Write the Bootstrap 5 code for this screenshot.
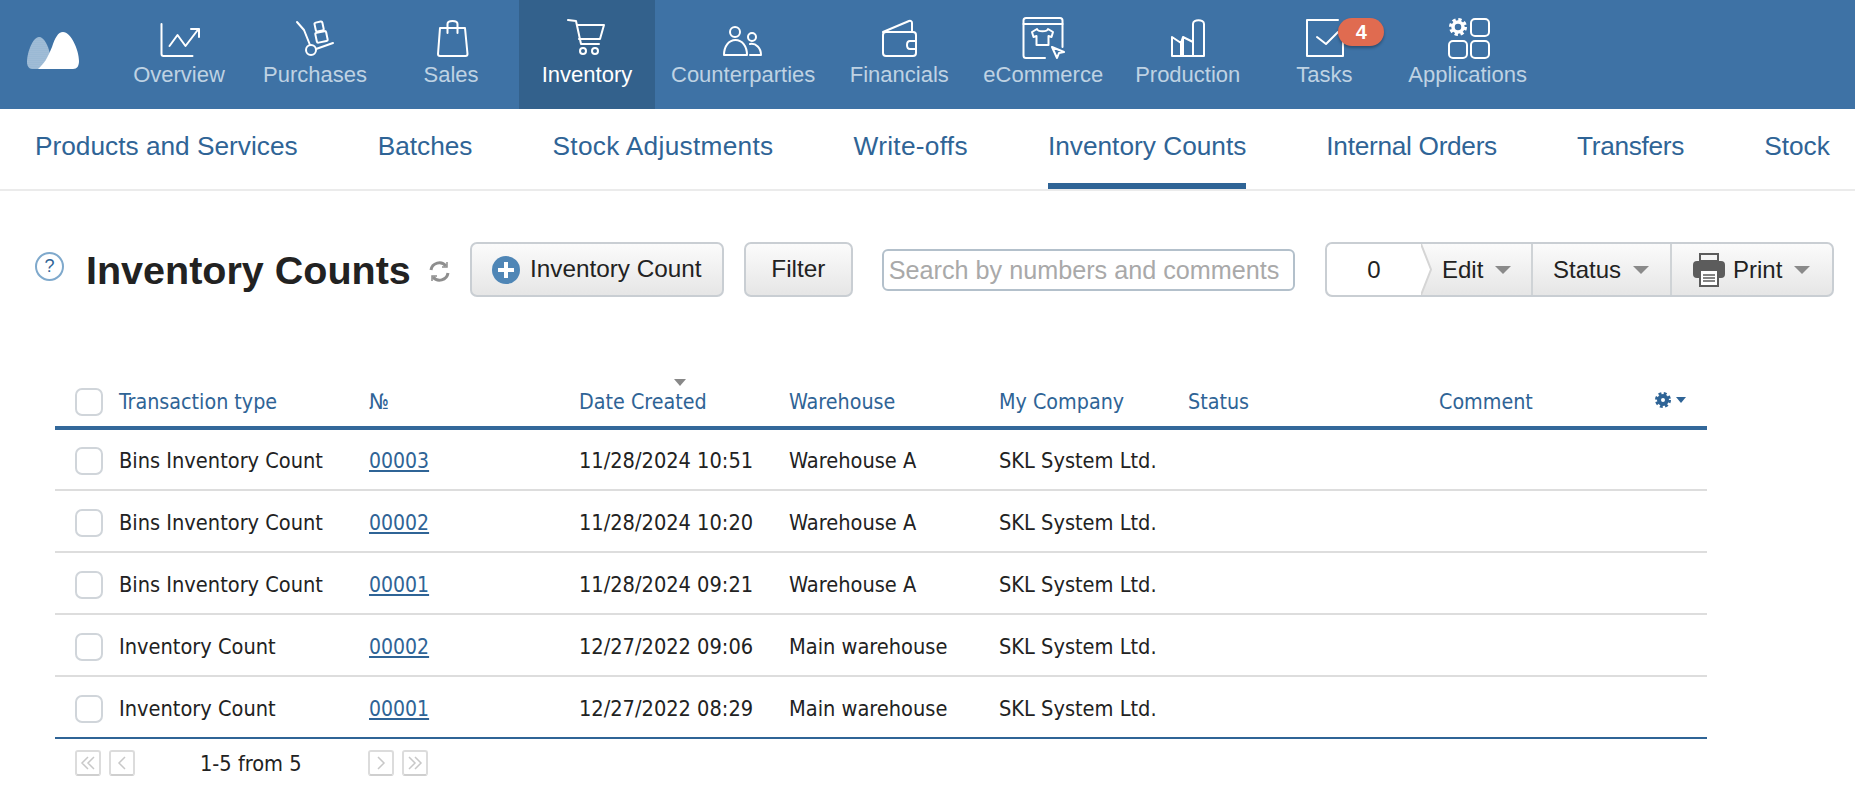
<!DOCTYPE html>
<html lang="en">
<head>
  <meta charset="UTF-8" />
  <meta name="viewport" content="width=device-width, initial-scale=1.0" />
  <title>Inventory Counts</title>
  <link href="https://cdn.jsdelivr.net/npm/bootstrap@5.3.0/dist/css/bootstrap.min.css" rel="stylesheet" />
  <style>
    html, body { height: 100%; }
    body {
      font-family: "Liberation Sans", Arial, sans-serif;
      color: #222;
      background: #fff;
      overflow: hidden;
    }

    /* top bar */
    .top-bar { height: 109px; background: #3e72a5; padding-left: 111px; }
    .logo-box { position: absolute; left: 27px; top: 32px; }
    .top-item {
      position: relative;
      min-width: 136px;
      padding: 18px 16px 0;
      text-align: center;
      color: #bfd2e3;
      font-size: 22px;
      line-height: 30px;
      text-decoration: none;
      white-space: nowrap;
    }
    .top-item svg { display: block; margin: 0 auto 2px; width: 44px; height: 40px; overflow: visible; fill: none; stroke: #fff; stroke-width: 2; stroke-linecap: round; stroke-linejoin: round; }
    .top-item.on { background: #33618c; color: #fff; }
    .task-count {
      position: absolute;
      left: 82px;
      top: 18px;
      width: 46px;
      height: 28px;
      border-radius: 14px;
      background: #e06b50;
      color: #fff;
      font-size: 20px;
      font-weight: 700;
      line-height: 28px;
      box-shadow: 0 2px 3px rgba(0, 0, 0, .3);
    }

    /* second level menu */
    .sub-bar {
      height: 82px;
      gap: 80px;
      padding-left: 35px;
      border-bottom: 2px solid #ebebeb;
      white-space: nowrap;
      overflow: hidden;
    }
    .sub-link {
      display: block;
      height: 80px;
      line-height: 74px;
      font-size: 26.25px;
      color: #2f6496;
      text-decoration: none;
    }
    .sub-link.on { border-bottom: 6px solid #2f6496; }
    .sub-link.spread { letter-spacing: .3px; }
    .sub-link.tight { letter-spacing: -.3px; }

    /* toolbar */
    .tool-row { margin-top: 51px; height: 55px; }
    .help-mark {
      width: 29px; height: 29px; margin: 10px 0 0 35px;
      border: 2px solid #7fa9cc; border-radius: 50%;
      color: #2f6496; font-size: 18px; line-height: 25px; text-align: center;
    }
    .page-title { font-size: 39.5px; font-weight: 700; color: #222; margin: 1px 0 0 22px; line-height: 55px; }
    .reload-mark { margin: 19px 20px 0 18px; }
    .btn-tool {
      height: 55px;
      padding: 0;
      font-size: 24.3px;
      line-height: 1;
      color: #222;
      border: 2px solid #c9ced3;
      border-radius: 7px;
      background: linear-gradient(#fbfbfb, #e6e6e6);
      display: flex;
      align-items: center;
      justify-content: center;
    }
    .btn-add { width: 254px; }
    .btn-add svg { margin-right: 10px; }
    .btn-filter { width: 109px; margin-left: 20px; }
    .find-box {
      width: 413px; height: 42px; margin: 7px 0 0 29px;
      padding: 0 5px;
      font-size: 25.2px;
      color: #222;
      border: 2px solid #b3c0cb; border-radius: 6px;
      outline: none;
    }
    .find-box::placeholder { color: #a9a9a9; }
    .act-group {
      position: absolute; left: 1325px; top: 242px;
      width: 509px; height: 55px;
      border: 2px solid #c9ced3; border-radius: 7px;
      background: linear-gradient(#fbfbfb, #e6e6e6);
      font-size: 24px;
    }
    .act-count { width: 94px; background: #fff; border-radius: 6px 0 0 6px; text-align: center; line-height: 51px; position: relative; }
    .act-count svg { position: absolute; left: 94px; top: 0; }
    .act-part { display: flex; align-items: center; height: 51px; border-right: 2px solid #cfd3d6; }
    .act-part:last-child { border-right: 0; }
    .part-edit { width: 112px; padding-left: 21px; }
    .part-status { width: 139px; padding-left: 20px; }
    .part-print { padding-left: 21px; }
    .drop-mark { width: 0; height: 0; border-left: 8px solid transparent; border-right: 8px solid transparent; border-top: 8px solid #8a8a8a; }

    /* table */
    .doc-wrap { margin: 71px 0 0 55px; width: 1652px; }
    .doc-table { table-layout: fixed; width: 100%; margin: 0; font-family: "DejaVu Sans Condensed", "DejaVu Sans", sans-serif; font-stretch: condensed; font-size: 21.6px; }
    .doc-table th, .doc-table td { padding: 0; vertical-align: middle; white-space: nowrap; color: #222; font-weight: 400; background: none; }
    .doc-table thead th { height: 60px; padding-top: 9px; font-size: 21.3px; color: #2f6496; border-bottom: 4px solid #33689a; position: relative; }
    .doc-table tbody td { height: 62px; padding-top: 4px; border-bottom: 2px solid #dddddd; }
    .doc-table tbody tr:last-child td { border-bottom: 2px solid #2f6496; }
    .doc-table a { color: #2f6496; font-size: 21px; }
    .tick-cell { display: flex; align-items: center; gap: 16px; padding-left: 20px; }
    .tick-box.form-check-input { width: 28px; height: 28px; margin: 0; border: 2px solid #d0d5da; border-radius: 7px; flex: none; }
    .sort-mark { position: absolute; left: 95px; top: 11px; width: 0; height: 0; border-left: 6px solid transparent; border-right: 6px solid transparent; border-top: 7px solid #888; }
    .col-gear { margin: 5px 19px 0 0; }

    /* paging */
    .pager { margin: 11px 0 0 75px; height: 26px; font-family: "DejaVu Sans Condensed", "DejaVu Sans", sans-serif; font-stretch: condensed; font-size: 21.6px; }
    .pg-btn { width: 26px; height: 26px; border: 2px solid #dcdcdc; border-bottom-color: #cfcfcf; border-radius: 3px; }
    .pg-btn svg { display: block; fill: none; stroke: #c8c8c8; stroke-width: 1.5; }
    .pg-label { width: 233px; padding-left: 65px; padding-top: 1px; line-height: 26px; color: #222; }
  </style>
</head>
<body>
  <div class="logo-box">
    <svg width="52" height="37" viewBox="0 0 52 37">
      <defs>
        <pattern id="dots" width="2" height="2" patternUnits="userSpaceOnUse">
          <rect width="2" height="2" fill="#8fb0cf" />
          <circle cx="1" cy="1" r=".5" fill="#dfe9f2" />
        </pattern>
      </defs>
      <path d="M0 30C0 20 6 5 12 5c5 0 9 8 11 17l-10 15H5c-3 0-5-3-5-7z" fill="url(#dots)" />
      <path d="M11 37c6-5 10-12 14-22C28 6 31 0 36 0c8 0 16 18 16 29 0 5-2 8-6 8z" fill="#fff" />
    </svg>
  </div>

  <nav class="top-bar d-flex">
    <a class="top-item" href="#">
      <svg viewBox="0 0 44 40"><path d="M4.5 6v30c0 1 .5 2 2 2h29" /><path d="M12.5 28l8-11 8 11 13-17" /><path d="M34 11h8v8" /></svg>
      Overview
    </a>
    <a class="top-item" href="#">
      <svg viewBox="0 0 44 40"><path d="M4 4l7 8 6 15" /><circle cx="18" cy="32" r="5" /><path d="M23 31l17-6" /><rect x="22" y="4" width="8" height="9" rx="1.500" transform="rotate(-12 26 8)" /><rect x="23" y="14" width="11" height="10" rx="1.500" transform="rotate(-12 28 19)" /></svg>
      Purchases
    </a>
    <a class="top-item" href="#">
      <svg viewBox="0 0 44 40"><path d="M11 10h25l2.500 26c0 1-1 2-2 2H11c-1 0-2-1-2-2z" /><path d="M18.500 15V6c0-2 2-3 5-3s5 1 5 3v9" /></svg>
      Sales
    </a>
    <a class="top-item on" href="#">
      <svg viewBox="0 0 44 40"><path d="M3 2l8 1 5 23h18" /><path d="M12 7h27l-4 14H14" /><circle cx="18" cy="33" r="3" /><circle cx="30" cy="33" r="3" /></svg>
      Inventory
    </a>
    <a class="top-item" href="#">
      <svg viewBox="0 0 44 40"><circle cx="14" cy="14" r="5" /><path d="M3 37c0-9 5-15 11.500-15S26 28 26 37z" /><circle cx="31" cy="19" r="4" /><path d="M29 26c6-1 11 4 11 11H29" /></svg>
      Counterparties
    </a>
    <a class="top-item" href="#">
      <svg viewBox="0 0 44 40"><path d="M6 14L32 3c2-.5 3 .5 3 2v9" /><rect x="6" y="14" width="33" height="24" rx="3" /><path d="M39 23h-6c-4 0-4 8 0 8h6" /></svg>
      Financials
    </a>
    <a class="top-item" href="#">
      <svg viewBox="0 0 44 40"><path d="M24 40H5c-1.500 0-2.500-1-2.500-2.500V2.500C2.500 1 3.500 0 5 0h34c1.500 0 2.500 1 2.500 2.500V29" /><path d="M2.500 6h39" /><path d="M16 11l-5 3 1.500 5 3-1v9h12v-9l3 1 1.500-5-5-3c-1 3-10 3-11 0z" /><path d="M31 29l12 5-5 1-2 5z" /></svg>
      eCommerce
    </a>
    <a class="top-item" href="#">
      <svg viewBox="0 0 44 40"><path d="M6 38V19l9 6v13M15 25l2-6 10 5M17 19v19M27 38V6c0-5 11-5 11 0v32zM6 38h32" /></svg>
      Production
    </a>
    <a class="top-item" href="#">
      <svg viewBox="0 0 44 40"><path d="M41 38H5V2h31M41 14v24" /><path d="M15 19l9 7 12-12" /></svg>
      Tasks
      <span class="task-count">4</span>
    </a>
    <a class="top-item" href="#">
      <svg viewBox="0 0 44 40">
        <circle cx="12" cy="9" r="5" stroke-width="3.500" />
        <circle cx="12" cy="9" r="7.500" stroke-width="3" stroke-linecap="butt" stroke-dasharray="3.300 2.600" />
        <rect x="25" y="1" width="18" height="17" rx="4" />
        <rect x="3" y="23" width="18" height="17" rx="4" />
        <rect x="25" y="23" width="18" height="17" rx="4" />
      </svg>
      Applications
    </a>
  </nav>

  <div class="sub-bar d-flex">
    <a class="sub-link" href="#">Products and Services</a>
    <a class="sub-link" href="#">Batches</a>
    <a class="sub-link spread" href="#">Stock Adjustments</a>
    <a class="sub-link spread" href="#">Write-offs</a>
    <a class="sub-link on" href="#">Inventory Counts</a>
    <a class="sub-link tight" href="#">Internal Orders</a>
    <a class="sub-link tight" href="#">Transfers</a>
    <a class="sub-link" href="#">Stock</a>
  </div>

  <div class="tool-row d-flex align-items-start">
    <div class="help-mark">?</div>
    <h1 class="page-title">Inventory Counts</h1>
    <svg class="reload-mark" width="21" height="21" viewBox="0 0 21 21" fill="none" stroke="#8e8e8e" stroke-width="3">
      <path d="M2 9a8.500 8.500 0 0 1 15-4" /><path d="M19 12a8.500 8.500 0 0 1-15 4" />
      <path d="M18 1v5h-5M3 20v-5h5" stroke-width="1.500" />
    </svg>
    <button class="btn-tool btn-add" type="button">
      <svg width="28" height="28" viewBox="0 0 28 28">
        <circle cx="14" cy="14" r="14" fill="#4f86b6" />
        <path d="M14 6v16M6 14h16" stroke="#fff" stroke-width="4" />
      </svg>
      Inventory Count
    </button>
    <button class="btn-tool btn-filter" type="button">Filter</button>
    <input class="find-box" type="text" placeholder="Search by numbers and comments" />
  </div>

  <div class="act-group d-flex">
    <div class="act-count">0
      <svg width="12" height="51" viewBox="0 0 12 51" fill="#fff" stroke="#d5d5d5" stroke-width="2"><path d="M0 0l10 25.500L0 51" /></svg>
    </div>
    <div class="act-part part-edit"><span class="me-2">Edit</span><span class="drop-mark ms-1"></span></div>
    <div class="act-part part-status"><span class="me-2">Status</span><span class="drop-mark ms-1"></span></div>
    <div class="act-part part-print">
      <svg class="me-2" width="32" height="34" viewBox="0 0 32 34" fill="#5c5c5c">
        <path d="M7 1h18v7H7z" fill="none" stroke="#5c5c5c" stroke-width="2" />
        <rect y="8" width="32" height="17" rx="4" />
        <rect x="7" y="17" width="18" height="16" fill="#fff" stroke="#5c5c5c" stroke-width="2" />
        <path d="M10 22h12M10 25h12M10 28h12" stroke="#5c5c5c" stroke-width="1.500" />
      </svg>
      <span class="me-2">Print</span><span class="drop-mark ms-1"></span>
    </div>
  </div>

  <div class="doc-wrap">
    <table class="table doc-table">
      <colgroup>
        <col style="width:314px" /><col style="width:210px" /><col style="width:210px" /><col style="width:210px" />
        <col style="width:189px" /><col style="width:251px" /><col />
      </colgroup>
      <thead>
        <tr>
          <th><div class="tick-cell"><input class="form-check-input tick-box" type="checkbox" />Transaction type</div></th>
          <th>№</th>
          <th><span class="sort-mark"></span>Date Created</th>
          <th>Warehouse</th>
          <th>My Company</th>
          <th>Status</th>
          <th>Comment
            <svg class="float-end col-gear" width="33" height="18" viewBox="0 0 33 18" fill="#2f6496">
              <circle cx="8" cy="9" r="4" fill="none" stroke="#2f6496" stroke-width="4" />
              <circle cx="8" cy="9" r="6.500" fill="none" stroke="#2f6496" stroke-width="3" stroke-dasharray="2.800 2.300" />
              <path d="M21 6h10l-5 6z" />
            </svg>
          </th>
        </tr>
      </thead>
      <tbody>
        <tr><td><div class="tick-cell"><input class="form-check-input tick-box" type="checkbox" />Bins Inventory Count</div></td><td><a href="#">00003</a></td><td>11/28/2024 10:51</td><td>Warehouse A</td><td>SKL System Ltd.</td><td></td><td></td></tr>
        <tr><td><div class="tick-cell"><input class="form-check-input tick-box" type="checkbox" />Bins Inventory Count</div></td><td><a href="#">00002</a></td><td>11/28/2024 10:20</td><td>Warehouse A</td><td>SKL System Ltd.</td><td></td><td></td></tr>
        <tr><td><div class="tick-cell"><input class="form-check-input tick-box" type="checkbox" />Bins Inventory Count</div></td><td><a href="#">00001</a></td><td>11/28/2024 09:21</td><td>Warehouse A</td><td>SKL System Ltd.</td><td></td><td></td></tr>
        <tr><td><div class="tick-cell"><input class="form-check-input tick-box" type="checkbox" />Inventory Count</div></td><td><a href="#">00002</a></td><td>12/27/2022 09:06</td><td>Main warehouse</td><td>SKL System Ltd.</td><td></td><td></td></tr>
        <tr><td><div class="tick-cell"><input class="form-check-input tick-box" type="checkbox" />Inventory Count</div></td><td><a href="#">00001</a></td><td>12/27/2022 08:29</td><td>Main warehouse</td><td>SKL System Ltd.</td><td></td><td></td></tr>
      </tbody>
    </table>
  </div>

  <div class="pager d-flex">
    <div class="pg-btn me-2"><svg width="22" height="22" viewBox="0 0 22 22"><path d="M11 5l-6 6 6 6M17 5l-6 6 6 6" /></svg></div>
    <div class="pg-btn"><svg width="22" height="22" viewBox="0 0 22 22"><path d="M14 5l-6 6 6 6" /></svg></div>
    <div class="pg-label">1-5 from 5</div>
    <div class="pg-btn me-2"><svg width="22" height="22" viewBox="0 0 22 22"><path d="M8 5l6 6-6 6" /></svg></div>
    <div class="pg-btn"><svg width="22" height="22" viewBox="0 0 22 22"><path d="M5 5l6 6-6 6M11 5l6 6-6 6" /></svg></div>
  </div>

  <script src="https://cdn.jsdelivr.net/npm/bootstrap@5.3.0/dist/js/bootstrap.bundle.min.js"></script>
</body>
</html>
